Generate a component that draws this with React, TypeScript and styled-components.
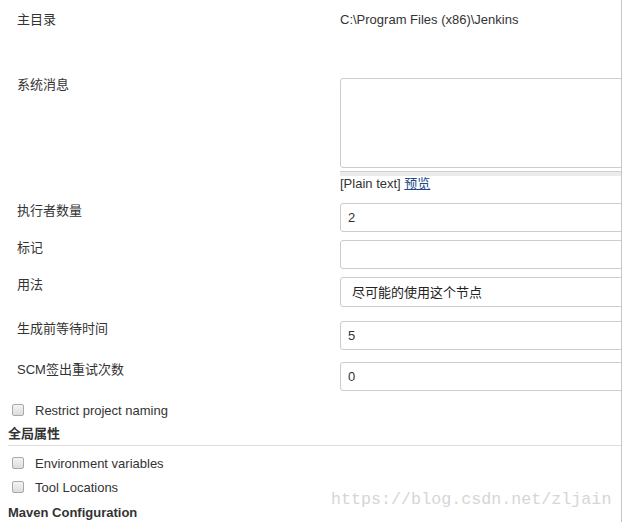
import styled, { createGlobalStyle } from "styled-components"

const GlobalStyle = createGlobalStyle`
  body {
    margin: 0;
    background: #ffffff;
    color: #333333;
    font-family: "Liberation Sans", Arial, "Noto Sans CJK SC", sans-serif;
    font-size: 13px;
  }
`

export default function App() {
  return (
    <Page>
      <GlobalStyle />

      <Row $top={12}>
        <Label>主目录</Label>
        <Value>C:\Program Files (x86)\Jenkins</Value>
      </Row>

      <Row $top={49}>
        <Label>系统消息</Label>
        <Field>
          <TextArea />
          <Grip />
          <Value>
            [Plain text] <PreviewLink href="#">预览</PreviewLink>
          </Value>
        </Field>
      </Row>

      <Row $top={11}>
        <Label>执行者数量</Label>
        <Field>
          <Input defaultValue="2" />
        </Field>
      </Row>
      <Row $top={8}>
        <Label>标记</Label>
        <Field>
          <Input defaultValue="" />
        </Field>
      </Row>
      <Row $top={8}>
        <Label>用法</Label>
        <Field>
          <Select defaultValue="normal">
            <option value="normal">尽可能的使用这个节点</option>
          </Select>
        </Field>
      </Row>
      <Row $top={14}>
        <Label>生成前等待时间</Label>
        <Field>
          <Input defaultValue="5" />
        </Field>
      </Row>
      <Row $top={12}>
        <Label>SCM签出重试次数</Label>
        <Field>
          <Input defaultValue="0" />
        </Field>
      </Row>

      <CheckRow $top={12}>
        <Box />
        Restrict project naming
      </CheckRow>

      <SectionHeader $top={7}>全局属性</SectionHeader>

      <CheckRow $top={10}>
        <Box />
        Environment variables
      </CheckRow>
      <CheckRow $top={8}>
        <Box />
        Tool Locations
      </CheckRow>

      <SectionTitle $top={9}>Maven Configuration</SectionTitle>

      <Watermark>https://blog.csdn.net/zljain</Watermark>
    </Page>
  )
}

const Page = styled.div`
  position: relative;
  width: 621px;
  height: 522px;
  border-right: 1px solid #c4c8cc;
  overflow: hidden;
`

const Row = styled.div<{ $top: number }>`
  display: grid;
  grid-template-columns: 340px 1fr;
  margin-top: ${(p) => p.$top}px;
`

const Label = styled.div`
  padding-left: 17px;
  line-height: 16px;
`

const Value = styled.div`
  line-height: 16px;
  white-space: nowrap;
`

const Field = styled.div`
  min-width: 0;
`

const TextArea = styled.textarea`
  display: block;
  box-sizing: border-box;
  width: calc(100% + 20px);
  height: 90px;
  margin: 1px 0 0;
  border: 1px solid #cccccc;
  border-radius: 3px;
  resize: none;
  font: inherit;
`

const Grip = styled.div`
  box-sizing: border-box;
  height: 5px;
  margin-top: 3px;
  background: #ebebeb;
  border-top: 1px solid #cfcfcf;
`

const PreviewLink = styled.a`
  color: #204a87;
  text-decoration: underline;
`

const Input = styled.input`
  display: block;
  box-sizing: border-box;
  width: calc(100% + 20px);
  height: 29px;
  margin: 0;
  padding: 0 7px;
  border: 1px solid #cccccc;
  border-radius: 3px;
  background: #ffffff;
  color: #333333;
  font: inherit;
`

const Select = styled.select`
  display: block;
  box-sizing: border-box;
  width: calc(100% + 20px);
  height: 30px;
  margin: 0;
  padding: 0 11px;
  border: 1px solid #cccccc;
  border-radius: 3px;
  background: #ffffff;
  color: #222222;
  font: inherit;
  appearance: none;
`

const CheckRow = styled.div<{ $top: number }>`
  display: flex;
  align-items: center;
  gap: 11px;
  margin-top: ${(p) => p.$top}px;
  padding-left: 12px;
  line-height: 16px;
`

const Box = styled.span`
  box-sizing: border-box;
  width: 12px;
  height: 12px;
  margin-top: -3px;
  border: 1px solid #a9a9a9;
  border-radius: 2px;
  background: linear-gradient(#f4f4f4, #dcdcdc);
`

const SectionTitle = styled.div<{ $top: number }>`
  margin-top: ${(p) => p.$top}px;
  padding-left: 8px;
  line-height: 16px;
  font-weight: bold;
  color: #333333;
`

const SectionHeader = styled(SectionTitle)`
  margin-left: 8px;
  padding-left: 0;
  padding-bottom: 3px;
  border-bottom: 1px solid #dddddd;
`

const Watermark = styled.div`
  position: absolute;
  left: 331px;
  top: 490px;
  font-family: "Liberation Mono", "Courier New", monospace;
  font-size: 16.7px;
  line-height: 20px;
  color: #d6d6d6;
  pointer-events: none;
`
